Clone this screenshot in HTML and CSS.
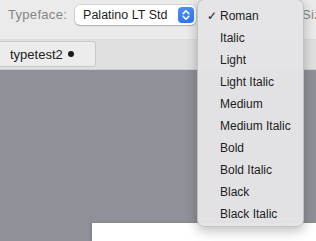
FILE: index.html
```html
<!DOCTYPE html>
<html>
<head>
<meta charset="utf-8">
<link rel="stylesheet" href="styles.css">
</head>
<body>
<div class="app">
  <div class="toolbar">
    <span class="label">Typeface:</span>
    <div class="select">
      <span class="select-text">Palatino LT Std</span>
      <span class="stepper">
        <svg width="16" height="16" viewBox="0 0 16 16"><path d="M5.2 6.6 L8 3.8 L10.8 6.6 M5.2 9.4 L8 12.2 L10.8 9.4" fill="none" stroke="#fff" stroke-width="1.6" stroke-linecap="round" stroke-linejoin="round"/></svg>
      </span>
    </div>
    <span class="spacer"></span>
    <span class="label size-label">Siz</span>
  </div>
  <div class="tabbar">
    <div class="tab">typetest2 <span class="dot"></span></div>
  </div>
  <div class="canvas">
    <div class="page"></div>
  </div>
  <div class="menu">
    <div class="item checked"><span class="check">✓</span>Roman</div>
    <div class="item">Italic</div>
    <div class="item">Light</div>
    <div class="item">Light Italic</div>
    <div class="item">Medium</div>
    <div class="item">Medium Italic</div>
    <div class="item">Bold</div>
    <div class="item">Bold Italic</div>
    <div class="item">Black</div>
    <div class="item">Black Italic</div>
  </div>
</div>
</body>
</html>
```
FILE: styles.css
```css
html, body {
  margin: 0;
  padding: 0;
}
body {
  width: 316px;
  height: 241px;
  overflow: hidden;
  font-family: "Liberation Sans", Arial, sans-serif;
  font-size: 13px;
  color: #222;
}
.app {
  position: relative;
  width: 316px;
  height: 241px;
  overflow: hidden;
  display: flex;
  flex-direction: column;
}
.toolbar {
  flex: 0 0 40px;
  height: 40px;
  box-sizing: border-box;
  background: #ebebeb;
  border-bottom: 1px solid #dadada;
  display: flex;
  align-items: flex-start;
  padding: 5px 0 0 8px;
}
.label {
  color: #858585;
  line-height: 20px;
  font-size: 13px;
  letter-spacing: 0.3px;
}
.select {
  margin-left: 8px;
  width: 121px;
  height: 20px;
  box-sizing: border-box;
  background: #fff;
  border-radius: 5px;
  box-shadow: 0 0 0 0.5px rgba(0,0,0,0.18), 0 1px 1.5px rgba(0,0,0,0.18);
  display: flex;
  align-items: center;
  padding: 0 2px 0 8px;
}
.select-text {
  flex: 1;
  color: #1e1e1e;
  font-size: 12.5px;
}
.stepper {
  width: 16px;
  height: 16px;
  border-radius: 4px;
  background: linear-gradient(#4b8ef8, #2f78f2);
  display: flex;
}
.spacer { flex: 1; }
.size-label {
  margin-right: 0;
  width: 14px;
  overflow: hidden;
}
.tabbar {
  flex: 0 0 30px;
  height: 30px;
  background: #e0e0e0;
  border-bottom: 1px solid #cfcfcf;
  padding-top: 1px;
  box-sizing: border-box;
}
.tab {
  width: 96px;
  height: 26px;
  box-sizing: border-box;
  background: #ececec;
  border: 1px solid #c9c9c9;
  border-left: none;
  border-radius: 0 3px 3px 0;
  display: flex;
  align-items: center;
  padding-left: 10px;
  gap: 5px;
  color: #222;
  font-size: 13px;
}
.dot {
  width: 6px;
  height: 6px;
  border-radius: 50%;
  background: #1a1a1a;
}
.canvas {
  flex: 1 1 auto;
  min-height: 0;
  overflow: hidden;
  background: #909098;
  padding: 153px 0 0 92px;
  box-sizing: border-box;
}
.page {
  background: #fff;
  height: 40px;
  box-shadow: -1px 0 2px rgba(0,0,0,0.15);
}
.menu {
  position: absolute;
  left: 197px;
  top: -1px;
  width: 107px;
  height: 228px;
  box-sizing: border-box;
  background: rgba(228,228,230,0.97);
  border: 0.5px solid rgba(0,0,0,0.15);
  border-radius: 7px;
  box-shadow: 0 4px 12px rgba(0,0,0,0.25);
  padding-top: 5px;
}
.item {
  height: 22px;
  line-height: 22px;
  padding-left: 22px;
  position: relative;
  color: #1c1c1c;
  font-size: 12px;
}
.check {
  position: absolute;
  left: 9px;
  font-size: 12px;
}
```
